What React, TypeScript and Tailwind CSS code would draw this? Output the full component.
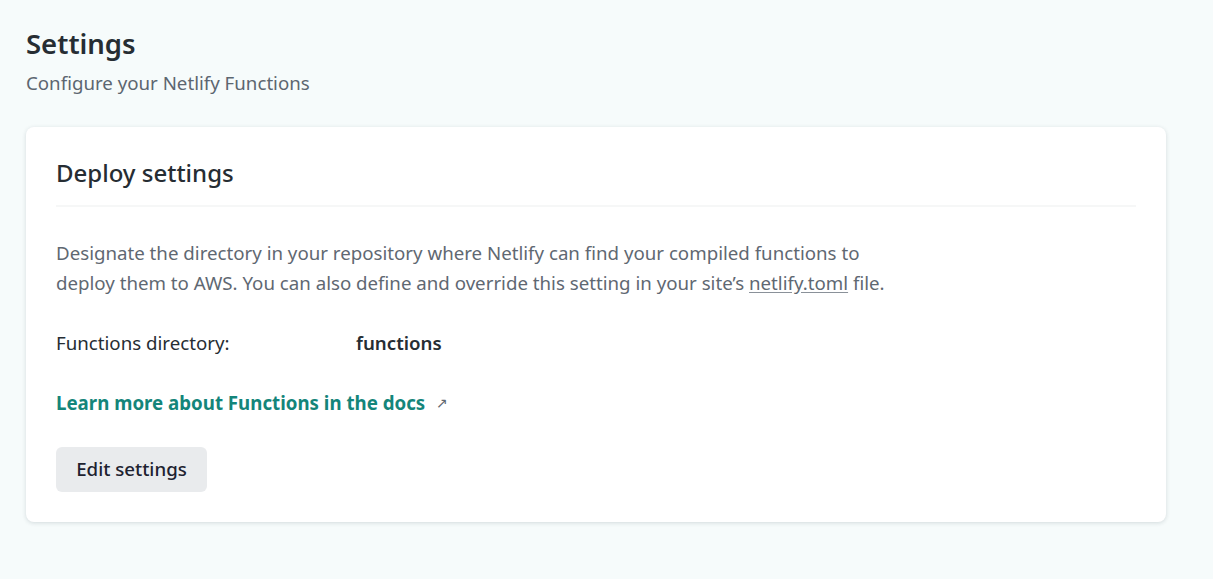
import React from "react";

const font = { fontFamily: '"Noto Sans", "Open Sans", sans-serif' };

export default function App() {
  return (
    <div className="min-h-[579px] bg-[#f6fbfb] pl-[26px] pr-[47px] pt-[27px]" style={font}>
      <h1 className="text-[27.5px] leading-[34px] font-semibold text-[#262d33]">Settings</h1>
      <p className="mt-[7px] text-[18.7px] leading-[30px] text-[#5c6670]">Configure your Netlify Functions</p>

      <section className="mt-[29px] rounded-lg bg-white px-[30px] pt-[30px] pb-[30px] shadow-[0_1px_4px_rgba(30,50,60,0.16)]">
        <h2 className="pb-[16px] text-[24px] leading-[32px] font-medium text-[#262d33] border-b-2 border-[#f6f7f7]">
          Deploy settings
        </h2>

        <p className="mt-[31px] text-[18.7px] leading-[30px] text-[#5f6872]">
          Designate the directory in your repository where Netlify can find your compiled functions to
          <br />
          deploy them to AWS. You can also define and override this setting in your site’s{" "}
          <a href="#" className="underline underline-offset-2 decoration-[#8a9199]">netlify.toml</a> file.
        </p>

        <div className="mt-[30px] flex text-[18.7px] leading-[30px]">
          <span className="w-[300px] text-[#262d33]">Functions directory:</span>
          <span className="font-semibold text-[#262d33]">functions</span>
        </div>

        <a href="#" className="mt-[30px] flex items-center gap-[11px] text-[18.7px] leading-[30px] font-bold text-[#14857a]">
          Learn more about Functions in the docs
          <span className="text-[14px] font-normal text-[#5f6872]">↗</span>
        </a>

        <button className="mt-[29px] h-[45px] w-[151px] rounded-md bg-[#e9ebed] text-[18.7px] font-medium text-[#1d2230]">
          Edit settings
        </button>
      </section>
    </div>
  );
}
